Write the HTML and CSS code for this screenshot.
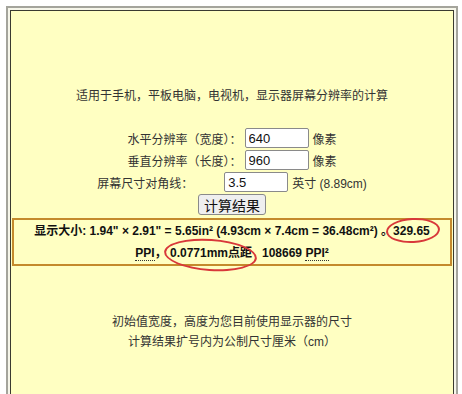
FILE: index.html
```html
<!DOCTYPE html>
<html lang="zh-CN">
<head>
<meta charset="UTF-8">
<title>屏幕分辨率计算</title>
<link rel="stylesheet" href="styles.css">
</head>
<body>
    <div class="frame">
        <div class="panel">
            <p class="intro">适用于手机，平板电脑，电视机，显示器屏幕分辨率的计算</p>

            <form class="calc">
                <div class="row">
                    <label>水平分辨率（宽度）：</label>
                    <input type="text" value="640">
                    <span class="unit">像素</span>
                </div>
                <div class="row">
                    <label>垂直分辨率（长度）：</label>
                    <input type="text" value="960">
                    <span class="unit">像素</span>
                </div>
                <div class="row">
                    <label class="diag">屏幕尺寸对角线：</label>
                    <input type="text" value="3.5">
                    <span class="unit">英寸 (8.89cm)</span>
                </div>
                <div class="row">
                    <button type="button">计算结果</button>
                </div>
            </form>

            <!-- result of the calculation -->
            <div class="result">
                <div>显示大小: 1.94" × 2.91" = 5.65in² (4.93cm × 7.4cm = 36.48cm²) 。<span class="mark mark-ppi">329.65</span></div>
                <div><abbr>PPI</abbr>， <span class="mark mark-dot">0.0771mm点距</span>&nbsp;&nbsp;&nbsp;108669 <abbr>PPI²</abbr></div>
            </div>

            <p class="note">初始值宽度，高度为您目前使用显示器的尺寸<br>计算结果扩号内为公制尺寸厘米（cm）</p>
        </div>
    </div>
</body>
</html>
```

FILE: styles.css
```css
body {
    margin: 0;
    background-color: #fff;
    font-family: "Liberation Sans", Arial, "Noto Sans CJK SC", sans-serif;
    font-size: 12px;
    color: #222;
    overflow: hidden;
}
.frame {
    margin: 6px 4px 0 6px;
    border: 2px solid #a4a49c;
    border-bottom: none;
    padding: 2px 2px 0 2px;
    background-color: #f6f6ea;
}
.panel {
    border: 1px solid #3a3a30;
    border-bottom: none;
    background-color: #ffffc2;
    min-height: 420px;
    text-align: center;
}
.intro {
    margin: 0;
    padding-top: 74px;
    line-height: 22px;
    color: #333;
}
.calc {
    margin: 20px 0 0;
}
.row {
    display: flex;
    justify-content: center;
    align-items: center;
    height: 22px;
    color: #333;
}
.row label {
    margin-right: 3px;
}
.row label.diag {
    margin-right: 31px;
}
.row input {
    width: 56px;
    height: 18px;
    padding: 0 3px;
    border: 1px solid #8a8a8a;
    border-radius: 2px;
    font-family: "Liberation Sans", Arial, sans-serif;
    font-size: 13px;
    color: #111;
    background-color: #fff;
}
.row .unit {
    margin-left: 4px;
}
.row button {
    height: 21px;
    margin-top: 1px;
    padding: 0 5px;
    border: 1px solid #8a8a8a;
    border-radius: 3px;
    background-color: #efefef;
    font-family: "Noto Sans CJK SC", sans-serif;
    font-size: 14px;
    line-height: 18px;
    color: #111;
}
.result {
    margin: 3px 1px 0 1px;
    border: 2px solid #c48a2c;
    font-weight: bold;
    line-height: 22px;
    color: #111;
}
.result abbr {
    text-decoration: none;
    border-bottom: 1px dotted #333;
    line-height: 13px;
    display: inline-block;
}
.mark {
    position: relative;
}
.mark::after {
    content: "";
    position: absolute;
    border: 2px solid #d8383a;
    border-radius: 50%;
}
.mark-ppi::after {
    left: -7px;
    right: -10px;
    top: -6px;
    bottom: -5px;
    transform: rotate(-3deg);
}
.mark-dot::after {
    left: -6px;
    right: -5px;
    top: -7px;
    bottom: -11px;
    transform: rotate(4deg);
}
.note {
    margin: 46px 0 0;
    line-height: 20px;
    color: #333;
}
```
